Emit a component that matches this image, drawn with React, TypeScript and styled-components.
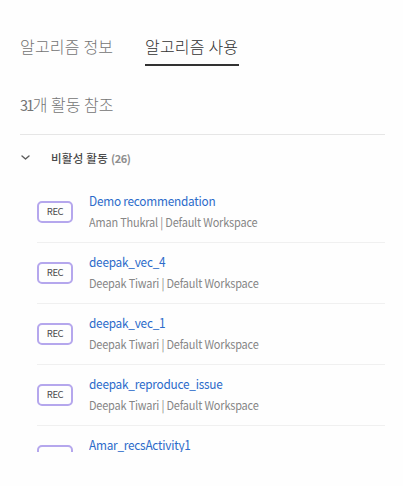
import React from "react";
import styled, { createGlobalStyle } from "styled-components";

const GlobalStyle = createGlobalStyle`
  * { box-sizing: border-box; }
  body {
    margin: 0;
    background: #fefefe;
    font-family: "Noto Sans CJK KR", "Noto Sans", sans-serif;
    overflow: hidden;
  }
`;

const Panel = styled.main`
  width: 403px;
  height: 486px;
  padding: 34px 18px 0 20px;
`;

const Tabs = styled.nav`
  display: flex;
  gap: 32px;
  height: 32px;
`;

const Tab = styled.div<{ $active?: boolean }>`
  width: ${(p) => (p.$active ? 94 : 93)}px;
  height: 32px;
  border-bottom: 2px solid ${(p) => (p.$active ? "#323232" : "transparent")};
  color: ${(p) => (p.$active ? "#323232" : "#747474")};
  font-size: 16px;
  font-weight: 300;
  line-height: 25px;
  letter-spacing: 0.2px;
  white-space: nowrap;
`;

const Summary = styled.h2`
  margin: 0;
  height: 69px;
  padding-top: 26px;
  border-bottom: 1px solid #e6e6e6;
  color: #747474;
  font-size: 16px;
  font-weight: 300;
  line-height: 25px;
`;

const Total = styled.span`
  margin-right: 0.5px;
  font-size: 14.5px;
  font-weight: 400;
  letter-spacing: -1.9px;
`;

const GroupHeader = styled.div`
  display: flex;
  align-items: center;
  height: 47px;
  padding: 0 0 1px 1px;
`;

const Chevron = styled.svg`
  width: 9px;
  height: 6px;
  margin-right: 21px;
`;

const GroupTitle = styled.span`
  color: #4b4b4b;
  font-size: 11.5px;
  font-weight: 500;
  line-height: 16px;
  letter-spacing: 0.25px;
`;

const GroupCount = styled.span`
  margin-left: 3px;
  color: #8e8e8e;
  font-size: 11px;
  font-weight: 700;
  line-height: 16px;
  letter-spacing: -0.5px;
`;

const List = styled.ul`
  height: 270px;
  margin: 0 0 0 17px;
  padding: 0;
  list-style: none;
  overflow: hidden;
`;

const Row = styled.li`
  display: flex;
  height: 61px;
  border-bottom: 1px solid #f0f0f0;
`;

const Badge = styled.span`
  flex: none;
  width: 36px;
  height: 22px;
  margin-top: 19px;
  border: 2px solid #b5a7ed;
  border-radius: 5px;
  color: #4b4b4b;
  font-size: 9.5px;
  line-height: 16px;
  letter-spacing: -0.4px;
  text-align: center;
`;

const Details = styled.div`
  margin-left: 16px;
  padding-top: 9px;
  white-space: nowrap;
`;

const Name = styled.div`
  height: 21px;
  color: #2c6bca;
  font-size: 13px;
  line-height: 20px;
  letter-spacing: -0.25px;
  transform: scaleX(0.908);
  transform-origin: left;
`;

const Owner = styled.div`
  color: #868686;
  font-size: 12px;
  line-height: 19px;
  letter-spacing: -0.2px;
  transform: scaleX(0.912);
  transform-origin: left;
`;

const activities = [
  { name: "Demo recommendation", owner: "Aman Thukral" },
  { name: "deepak_vec_4", owner: "Deepak Tiwari" },
  { name: "deepak_vec_1", owner: "Deepak Tiwari" },
  { name: "deepak_reproduce_issue", owner: "Deepak Tiwari" },
  { name: "Amar_recsActivity1" },
];

export default function App() {
  return (
    <>
      <GlobalStyle />
      <Panel>
        <Tabs>
          <Tab>알고리즘 정보</Tab>
          <Tab $active>알고리즘 사용</Tab>
        </Tabs>
        <Summary>
          <Total>31</Total>개 활동 참조
        </Summary>
        <GroupHeader>
          <Chevron viewBox="0 0 9 6" fill="none">
            <path d="M1 1l3.5 3L8 1" stroke="#5c5c5c" strokeWidth="1.4" strokeLinecap="round" strokeLinejoin="round" />
          </Chevron>
          <GroupTitle>비활성 활동</GroupTitle>
          <GroupCount>(26)</GroupCount>
        </GroupHeader>
        <List>
          {activities.map((a) => (
            <Row key={a.name}>
              <Badge>{a.owner && "REC"}</Badge>
              <Details>
                <Name>{a.name}</Name>
                {a.owner && <Owner>{a.owner} | Default Workspace</Owner>}
              </Details>
            </Row>
          ))}
        </List>
      </Panel>
    </>
  );
}
